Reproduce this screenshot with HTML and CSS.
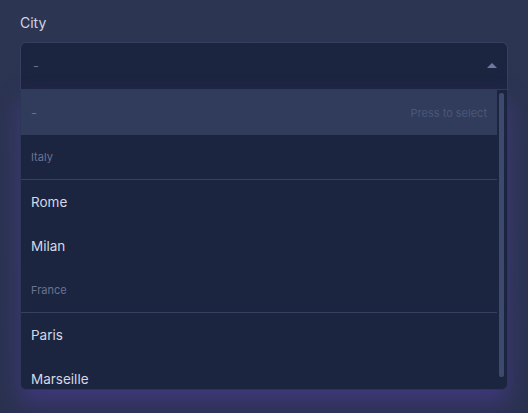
FILE: index.html
```html
<!DOCTYPE html>
<html lang="en">
<head>
  <meta charset="UTF-8">
  <meta name="viewport" content="width=device-width, initial-scale=1">
  <title>City select</title>
  <link rel="stylesheet" href="styles.css">
</head>
<body>

  <div class="field">
    <div class="field-label">City</div>

    <div class="select">
      <span class="select-value">-</span>
      <svg class="caret" width="10" height="5" viewBox="0 0 10 5"><path d="M0 5 L5 0 L10 5 Z" fill="#6e7ba0"/></svg>
    </div>

    <div class="listbox">
      <div class="options">
        <div class="option active">
          <span class="dash">-</span>
          <span class="hint">Press to select</span>
        </div>
        <div class="group">Italy</div>
        <div class="option">Rome</div>
        <div class="option">Milan</div>
        <div class="group">France</div>
        <div class="option">Paris</div>
        <div class="option">Marseille</div>
      </div>
      <div class="scroll-track">
        <div class="scroll-thumb"></div>
      </div>
    </div>
  </div>

</body>
</html>
```

FILE: styles.css
```css
/* Basic Reset */
* { margin: 0; padding: 0; box-sizing: border-box; }
body {
  font-family: 'Inter', 'Noto Sans', sans-serif;
  background: linear-gradient(to bottom, #2c3552, #2a3250);
  min-height: 100vh;
  overflow: hidden;
}
.field {
  padding: 14px 20px 0 20px;
}
.field-label {
  font-size: 14px;
  line-height: 18px;
  color: #d0d4e1;
  margin-bottom: 10px;
}
.select {
  height: 48px;
  background: #1c2540;
  border: 1px solid #343f62;
  border-bottom-color: #2f3a5c;
  border-radius: 6px 6px 0 0;
  display: flex;
  align-items: center;
  justify-content: space-between;
  padding: 0 10px 0 12px;
}
.select-value {
  font-size: 13px;
  color: #66708e;
}
.caret {
  display: block;
  margin-top: -2px;
}
.listbox {
  height: 300px;
  background: #1c2540;
  border: 1px solid #2c3656;
  border-top: none;
  border-radius: 0 0 6px 6px;
  display: flex;
  overflow: hidden;
  box-shadow: 0 12px 22px rgba(78, 60, 150, 0.6);
}
.options {
  flex: 1;
}
.option {
  height: 44px;
  display: flex;
  align-items: center;
  justify-content: space-between;
  padding: 0 10px 0 10px;
  font-size: 13.5px;
  color: #d3d8e6;
}
.option.active {
  height: 45px;
  background: #313c5c;
}
.dash {
  font-size: 13px;
  color: #66708e;
}
.hint {
  font-size: 11px;
  color: #4b5679;
}
.group {
  height: 45px;
  display: flex;
  align-items: center;
  padding: 0 10px;
  font-size: 11px;
  color: #6a7391;
  border-bottom: 1px solid #36415f;
}
.scroll-track {
  width: 10px;
  padding: 3px 3px 0 2px;
}
.scroll-thumb {
  height: 284px;
  background: #3d4a6e;
  border-radius: 2px;
}
```
